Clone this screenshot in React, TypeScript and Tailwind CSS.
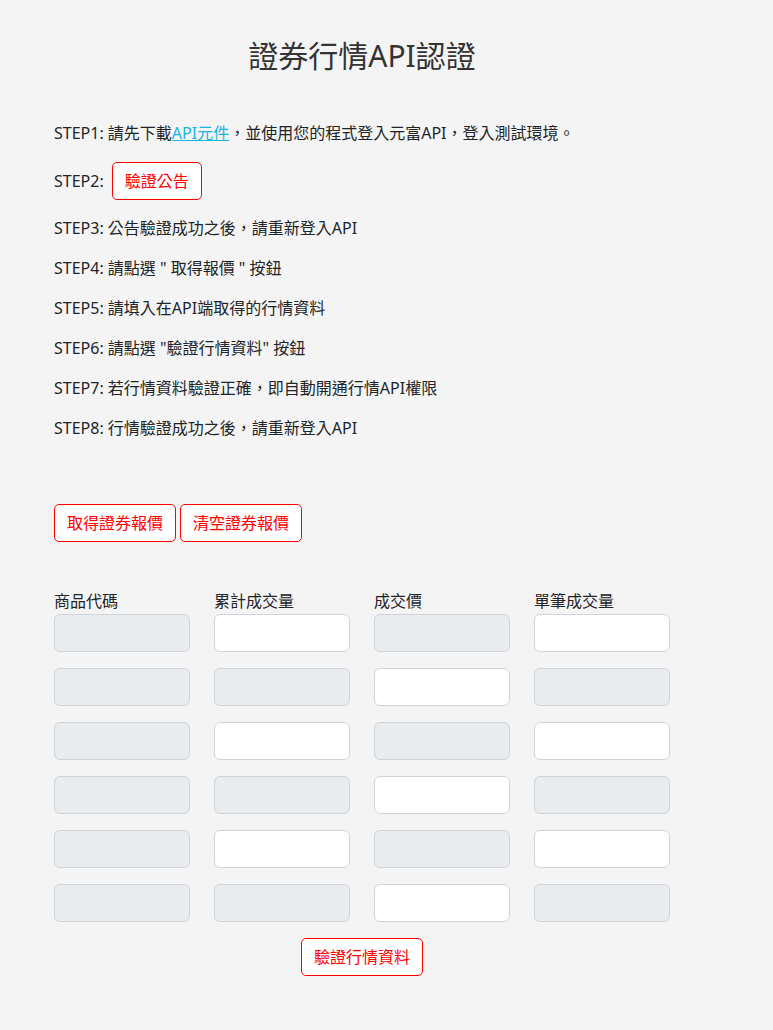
import React from "react";

const font = {
  fontFamily: '"Noto Sans", "Noto Sans CJK TC", sans-serif',
};

const RedButton: React.FC<{ children: React.ReactNode }> = ({ children }) => (
  <button
    type="button"
    className="h-[38px] rounded-[5px] border border-[#ff0000] bg-white px-3 text-base leading-6 text-[#ff0000]"
  >
    {children}
  </button>
);

// true = editable (white), false = disabled (gray)
const rows: boolean[][] = [
  [false, true, false, true],
  [false, false, true, false],
  [false, true, false, true],
  [false, false, true, false],
  [false, true, false, true],
  [false, false, true, false],
];

const labels = ["商品代碼", "累計成交量", "成交價", "單筆成交量"];

const Field: React.FC<{ editable: boolean }> = ({ editable }) => (
  <input
    type="text"
    disabled={!editable}
    className={
      editable
        ? "block h-[38px] w-[136px] rounded-md border border-[#ced4da] bg-white px-3 text-base"
        : "block h-[38px] w-[136px] rounded-md border border-[#ced4da] bg-[#e9ecef] px-3 text-base"
    }
  />
);

export default function App() {
  return (
    <div className="min-h-screen bg-[#f4f4f4] text-[#212529]" style={font}>
      <div className="ml-[54px] w-[616px] pb-[54px] pt-[38px]">
        <h1 className="text-center text-[30px] font-normal leading-9 text-[#333]">
          證券行情API認證
        </h1>

        <div className="mt-[47px] flex flex-col gap-4 text-base leading-6">
          <p>
            STEP1: 請先下載
            <a href="#" className="text-[#1ab4e6] underline">
              API元件
            </a>
            ，並使用您的程式登入元富API，登入測試環境。
          </p>
          <div className="mt-px flex h-[38px] items-center gap-2">
            <span>STEP2:</span>
            <RedButton>驗證公告</RedButton>
          </div>
          <p>STEP3: 公告驗證成功之後，請重新登入API</p>
          <p>STEP4: 請點選 " 取得報價 " 按鈕</p>
          <p>STEP5: 請填入在API端取得的行情資料</p>
          <p>STEP6: 請點選 "驗證行情資料" 按鈕</p>
          <p>STEP7: 若行情資料驗證正確，即自動開通行情API權限</p>
          <p>STEP8: 行情驗證成功之後，請重新登入API</p>
        </div>

        <div className="mt-16 flex gap-1">
          <RedButton>取得證券報價</RedButton>
          <RedButton>清空證券報價</RedButton>
        </div>

        <div className="mt-[47px] grid grid-cols-[repeat(4,136px)] gap-x-6 gap-y-4">
          {rows.map((row, r) =>
            row.map((editable, c) => (
              <div key={`${r}-${c}`} className="flex flex-col">
                {r === 0 && (
                  <label className="mb-px text-base leading-6">{labels[c]}</label>
                )}
                <Field editable={editable} />
              </div>
            )),
          )}
        </div>

        <div className="mt-4 flex justify-center">
          <RedButton>驗證行情資料</RedButton>
        </div>
      </div>
    </div>
  );
}
